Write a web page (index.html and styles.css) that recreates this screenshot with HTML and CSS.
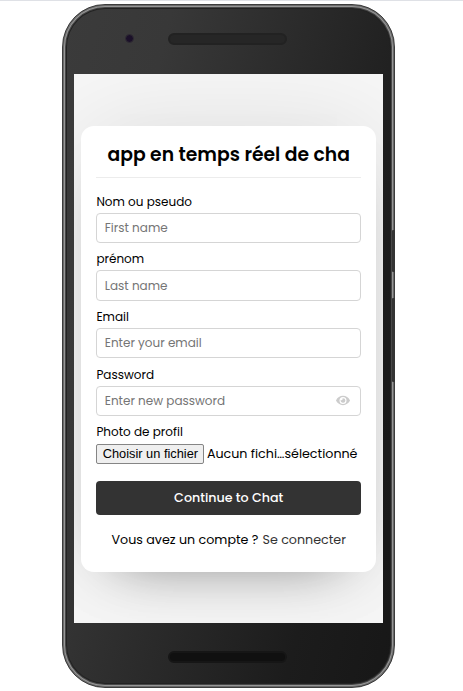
FILE: index.html
```html
<!DOCTYPE html>
<html lang="fr">
<head>
<meta charset="utf-8">
<title>Chat</title>
<link rel="stylesheet" href="styles.css">
</head>
<body>
<div class="phone">
  <div class="top"><i class="camera"></i><i class="speaker"></i></div>
  <main class="screen">
    <form class="card">
      <h1>app en temps réel de cha</h1>
      <div class="field"><label>Nom ou pseudo</label><div class="input">First name</div></div>
      <div class="field"><label>prénom</label><div class="input">Last name</div></div>
      <div class="field"><label>Email</label><div class="input">Enter your email</div></div>
      <div class="field"><label>Password</label><div class="input">Enter new password
        <svg class="eye" viewBox="0 0 576 512"><path fill="#ccc" d="M572.52 241.4C518.29 135.59 410.93 64 288 64S57.68 135.64 3.48 241.41a32.35 32.35 0 0 0 0 29.19C57.71 376.41 165.07 448 288 448s230.32-71.64 284.52-177.41a32.35 32.35 0 0 0 0-29.19zM288 400a144 144 0 1 1 144-144 143.93 143.93 0 0 1-144 144zm0-240a95.31 95.31 0 0 0-25.31 3.79 47.85 47.85 0 0 1-66.9 66.9A95.78 95.78 0 1 0 288 160z"/></svg></div></div>
      <div class="photo"><label>Photo de profil</label><div class="file"><span class="choose">Choisir un fichier</span><span class="filename">Aucun fichi…sélectionné</span></div></div>
      <div class="submit">Continue to Chat</div>
      <p class="login"><span>Vous avez un compte ?</span><a class="signin">Se connecter</a></p>
    </form>
  </main>
  <div class="bottom"><i class="speaker low"></i></div>
  <i class="side power"></i><i class="side volume"></i>
</div>
</body>
</html>
```
FILE: styles.css
```css
* { box-sizing: border-box; }
html { background: #fff; }
body {
  margin: 0; height: 691px; overflow: hidden;
  border-top: 1px solid #dfe1e6;
  padding: 3px 0 0 62px;
  font-family: Poppins, Inter, sans-serif;
  color: #000;
}
.phone {
  position: relative; width: 333px; height: 684px;
  border-radius: 43px; border: 1px solid #3c3c3c;
  background: linear-gradient(104deg, #3b3b3b 0%, #383838 22%, #1c1c1c 78%, #171717 100%);
  box-shadow: inset 0 0 0 1px #6a6a6a, inset 0 0 0 2px #969696, inset 0 0 0 3px #484848, inset 0 0 0 4px #222;
  padding: 0 11px;
}
.top { height: 69px; padding: 28px 0 0 51px; display: flex; }
.camera { width: 9px; height: 9px; margin-top: 1px; border-radius: 50%; background: #1b1029; border: 1px solid #302d34; }
.speaker { display: block; width: 119px; height: 12px; margin-left: 34px; border-radius: 6px; background: #262626; border: 2px solid #222; }
.bottom { padding: 28px 0 0 60px; }
.speaker.low { background: #101010; border-color: #161616; }
.side { position: absolute; right: -1px; width: 3px; background: #343434; border-radius: 1px; }
.power { top: 225px; height: 42px; }
.volume { top: 293px; height: 84px; }
.screen { width: 309px; height: 549px; background: #f7f7f7; overflow: hidden; padding: 51.7px 7px 0 7.4px; }
.card {
  width: 294.6px; height: 446.3px; padding: 14px 15px; border-radius: 13px; background: #fff;
  box-shadow: 0 0 104px rgba(0,0,0,.1), 0 26px 52px -39px rgba(0,0,0,.5);
  font-size: 12px;
}
h1 { margin: 0 0 16px; height: 38px; border-bottom: 1px solid #ececec; text-align: center; font-size: 18.75px; line-height: 29px; font-weight: 600; white-space: nowrap; }
.field { height: 57.7px; }
label { display: block; height: 19px; line-height: 16.6px; white-space: nowrap; }
.input { display: flex; align-items: center; height: 30.3px; border: 1px solid #d5d5d5; border-radius: 4px; padding: 0 10px 0 7.4px; color: #757575; white-space: nowrap; }
.eye { width: 14px; height: 13px; margin-left: auto; }
.file { display: flex; align-items: center; height: 20px; white-space: nowrap; margin-top: .7px; font-size: 12.68px; }
.choose { width: 108px; height: 20px; border: 1px solid #858585; border-radius: 2px; background: #efefef; font: 12.8px/18px "Liberation Sans", sans-serif; text-align: center; margin-right: 2.5px; }
.submit { height: 34px; margin-top: 17px; border-radius: 4px; background: #333; color: #fff; text-align: center; font-size: 12.68px; font-weight: 500; line-height: 33px; }
.login { margin: 16px 0 0; display: flex; justify-content: center; gap: 4px; font-size: 12.68px; line-height: 18px; white-space: nowrap; }
.signin { color: #333; }
```
